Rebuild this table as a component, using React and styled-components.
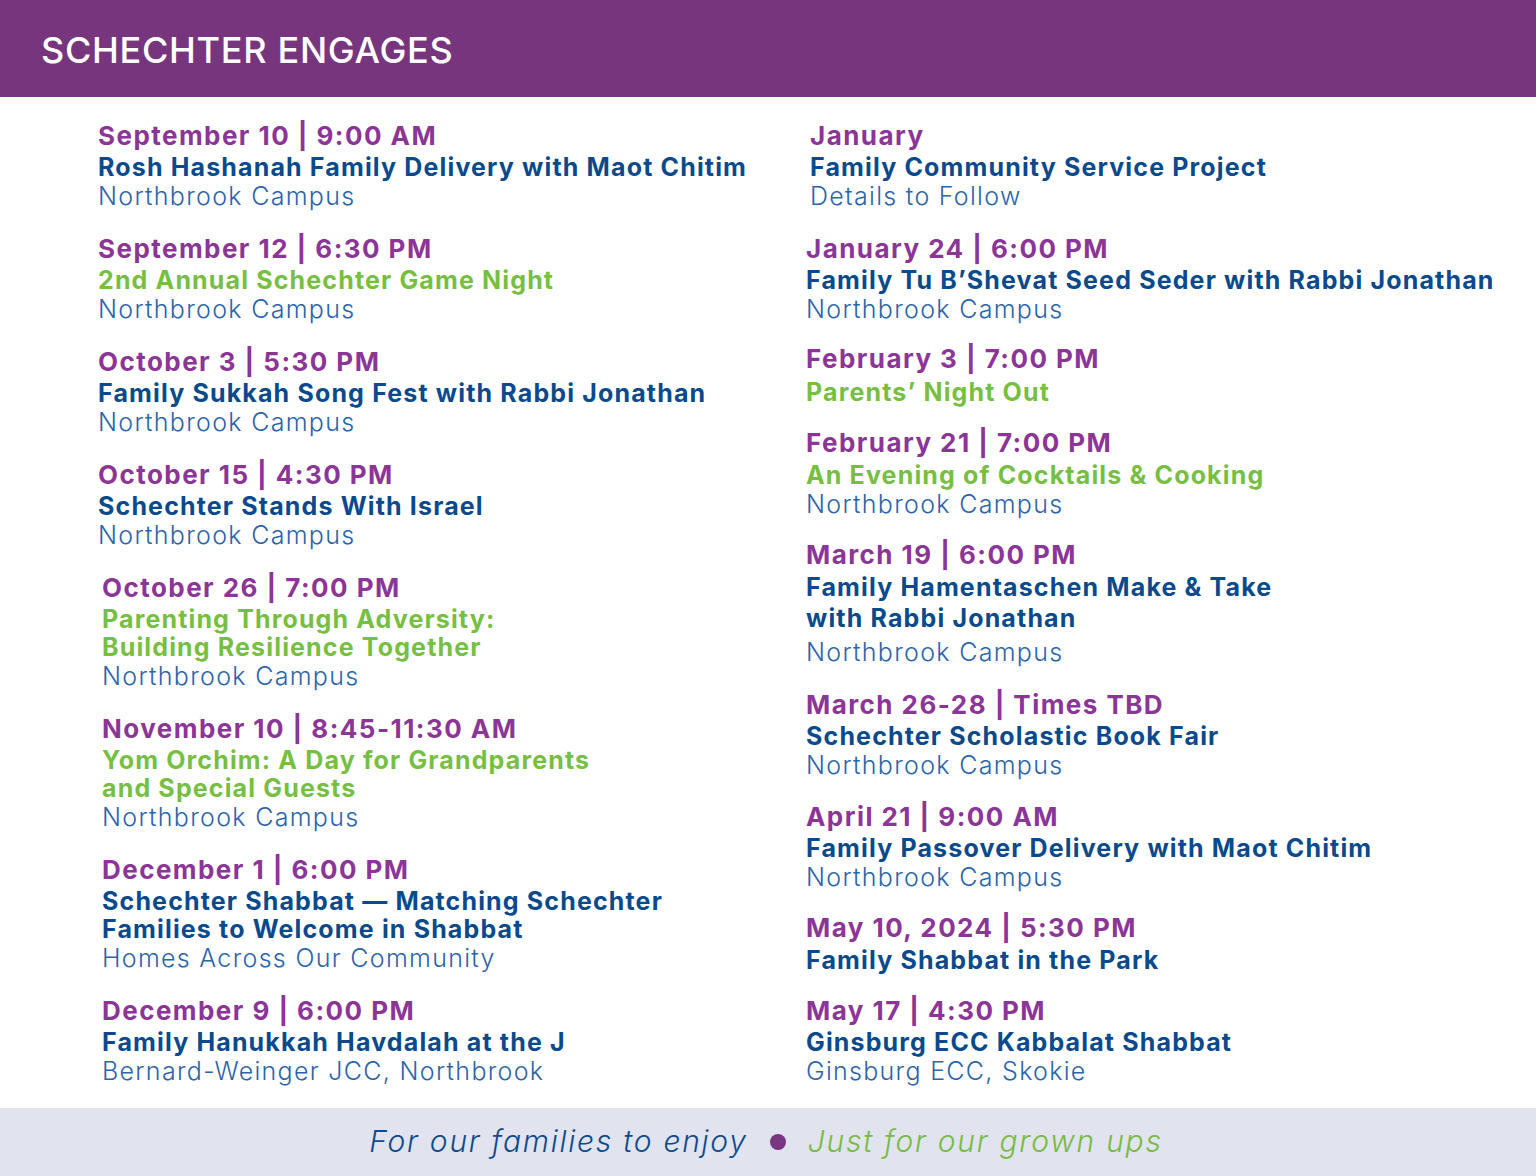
import React from "react";
import styled, { createGlobalStyle } from "styled-components";

const Global = createGlobalStyle`
  html, body { margin: 0; padding: 0; background: #fff; }
  body { font-family: "Inter", "DejaVu Sans", sans-serif; }
`;

const Page = styled.div`
  min-height: 100vh;
  display: flex;
  flex-direction: column;
`;

const Header = styled.header`
  height: 97px;
  background: #76357d;
  display: flex;
  align-items: center;
  padding-left: 41px;
  box-sizing: border-box;
`;

const HeaderTitle = styled.h1`
  margin: 0;
  color: #fff;
  font-family: "Inter", sans-serif;
  font-weight: 500;
  font-size: 36px;
  letter-spacing: 0.7px;
  padding-top: 3px;
`;

const Main = styled.main`
  flex: 1;
  display: grid;
  grid-template-columns: 708px 1fr;
  padding: 24px 0 0 98px;
`;

const Column = styled.div`
  display: flex;
  flex-direction: column;
`;

const Event = styled.div`
  display: flex;
  flex-direction: column;
  margin-left: ${(p) => p.$indent || 0}px;
  margin-top: ${(p) => p.$gap}px;
  &:first-child { margin-top: 0; }
`;

const DateLine = styled.div`
  color: #8b3597;
  font-weight: 700;
  font-size: 26px;
  letter-spacing: 1.45px;
  line-height: 29px;
  margin-bottom: ${(p) => 3 + (p.$extra || 0)}px;
  white-space: nowrap;
`;

const Title = styled.div`
  color: ${(p) => (p.$green ? "#76bf43" : "#0a4a8c")};
  font-weight: 700;
  font-size: 25px;
  letter-spacing: 1.15px;
  line-height: 28px;
  margin-top: ${(p) => p.$mt || 0}px;
  white-space: nowrap;
`;

const Location = styled.div`
  color: #2c64a8;
  font-weight: 300;
  font-size: 25px;
  letter-spacing: 1.3px;
  line-height: 29px;
  margin-top: ${(p) => 1 + (p.$extra || 0)}px;
  white-space: nowrap;
`;

const Footer = styled.footer`
  height: 68px;
  background: #e1e3ef;
  display: flex;
  align-items: center;
  justify-content: center;
  gap: 22px;
  padding: 0 4px 3px 0;
  box-sizing: border-box;
`;

const FooterText = styled.span`
  font-style: italic;
  font-weight: 300;
  font-size: 30px;
  letter-spacing: 1.75px;
  color: ${(p) => (p.$green ? "#76bb43" : "#0d4b8b")};
`;

const Dot = styled.span`
  width: 16px;
  height: 16px;
  border-radius: 50%;
  background: #7a3583;
  margin-top: 2px;
`;

const left = [
  { date: "September 10 | 9:00 AM", title: ["Rosh Hashanah Family Delivery with Maot Chitim"], loc: "Northbrook Campus" },
  { date: "September 12 | 6:30 PM", title: ["2nd Annual Schechter Game Night"], green: true, loc: "Northbrook Campus" },
  { date: "October 3 | 5:30 PM", title: ["Family Sukkah Song Fest with Rabbi Jonathan"], loc: "Northbrook Campus" },
  { date: "October 15 | 4:30 PM", title: ["Schechter Stands With Israel"], loc: "Northbrook Campus" },
  { date: "October 26 | 7:00 PM", title: ["Parenting Through Adversity:", "Building Resilience Together"], green: true, loc: "Northbrook Campus", indent: 4 },
  { date: "November 10 | 8:45-11:30 AM", title: ["Yom Orchim: A Day for Grandparents", "and Special Guests"], green: true, loc: "Northbrook Campus", indent: 4 },
  { date: "December 1 | 6:00 PM", title: ["Schechter Shabbat \u2014 Matching Schechter", "Families to Welcome in Shabbat"], loc: "Homes Across Our Community", indent: 4 },
  { date: "December 9 | 6:00 PM", title: ["Family Hanukkah Havdalah at the J"], loc: "Bernard-Weinger JCC, Northbrook", indent: 4 },
];

const right = [
  { date: "January", title: ["Family Community Service Project"], loc: "Details to Follow", indent: 4 },
  { date: "January 24 | 6:00 PM", title: ["Family Tu B\u2019Shevat Seed Seder with Rabbi Jonathan"], loc: "Northbrook Campus", gap: 23 },
  { date: "February 3 | 7:00 PM", title: ["Parents\u2019 Night Out"], green: true, dateExtra: 2, gap: 20 },
  { date: "February 21 | 7:00 PM", title: ["An Evening of Cocktails & Cooking"], green: true, loc: "Northbrook Campus", dateExtra: 1, gap: 22 },
  { date: "March 19 | 6:00 PM", title: ["Family Hamentaschen Make & Take", "with Rabbi Jonathan"], loc: "Northbrook Campus", dateExtra: 1, lineExtra: 3, locExtra: 5, gap: 21 },
  { date: "March 26-28 | Times TBD", title: ["Schechter Scholastic Book Fair"], loc: "Northbrook Campus", gap: 23 },
  { date: "April 21 | 9:00 AM", title: ["Family Passover Delivery with Maot Chitim"], loc: "Northbrook Campus", gap: 22 },
  { date: "May 10, 2024 | 5:30 PM", title: ["Family Shabbat in the Park"], dateExtra: 1, gap: 21 },
  { date: "May 17 | 4:30 PM", title: ["Ginsburg ECC Kabbalat Shabbat"], loc: "Ginsburg ECC, Skokie", gap: 22 },
];

function EventBlock({ e, gap }) {
  return (
    <Event $indent={e.indent} $gap={e.gap ?? gap}>
      <DateLine $extra={e.dateExtra}>{e.date}</DateLine>
      {e.title.map((t, i) => (
        <Title key={t} $green={e.green} $mt={i > 0 ? e.lineExtra : 0}>{t}</Title>
      ))}
      {e.loc && <Location $extra={e.locExtra}>{e.loc}</Location>}
    </Event>
  );
}

export default function App() {
  return (
    <Page>
      <Global />
      <Header>
        <HeaderTitle>SCHECHTER ENGAGES</HeaderTitle>
      </Header>
      <Main>
        <Column>
          {left.map((e) => (
            <EventBlock key={e.date} e={e} gap={23} />
          ))}
        </Column>
        <Column>
          {right.map((e) => (
            <EventBlock key={e.date} e={e} gap={22} />
          ))}
        </Column>
      </Main>
      <Footer>
        <FooterText>For our families to enjoy</FooterText>
        <Dot />
        <FooterText $green>Just for our grown ups</FooterText>
      </Footer>
    </Page>
  );
}
